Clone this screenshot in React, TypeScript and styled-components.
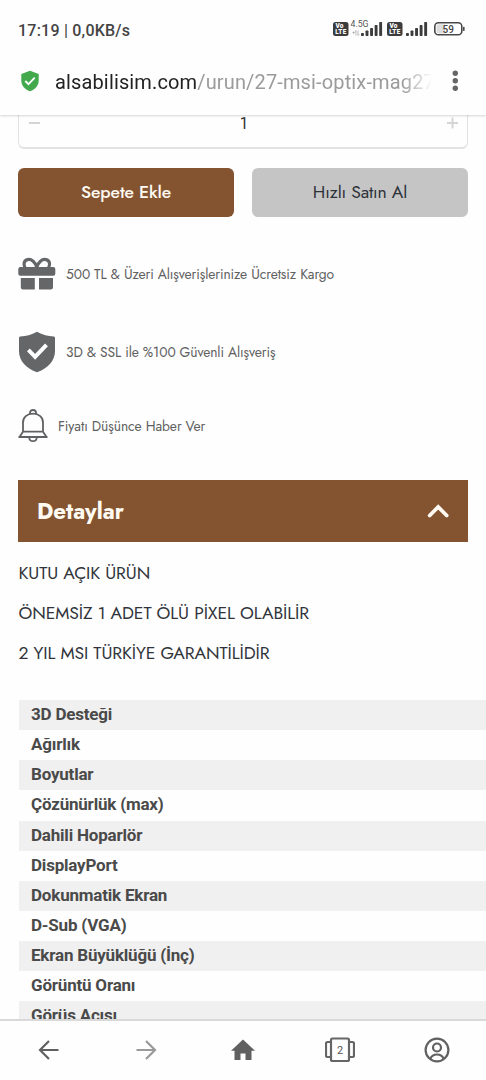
import React from "react";
import styled, { createGlobalStyle } from "styled-components";

const brown = "#845431";
const jost = '"Jost", "Lato", sans-serif';

const GlobalStyle = createGlobalStyle`
  * { box-sizing: border-box; }
  html, body { margin: 0; padding: 0; background: #fefefe; }
  body { overflow: hidden; }
  svg { display: block; flex: none; }
`;

const Screen = styled.div`
  width: 486px;
  height: 1080px;
  display: flex;
  flex-direction: column;
  overflow: hidden;
  background: #fefefe;
  font-family: Roboto, sans-serif;
  white-space: nowrap;
`;

const Header = styled.header`
  flex: none;
  height: 115px;
  background: #fefefe;
  box-shadow: 0 1px 2px rgba(0, 0, 0, 0.16);
  z-index: 1;
`;

const StatusBar = styled.div`
  height: 58px;
  padding: 2px 21px 0 18px;
  display: flex;
  align-items: center;
  justify-content: space-between;
`;

const Clock = styled.span`
  font-size: 16px;
  font-weight: 500;
  color: #444;
  letter-spacing: 0.22px;
`;

const AddressBar = styled.div`
  height: 46px;
  padding: 0 26px 0 20px;
  display: flex;
  align-items: center;
`;

const Address = styled.div`
  width: 377px;
  margin: 1px 19px 0 15px;
  overflow: hidden;
  font-size: 20px;
  line-height: 30px;
  letter-spacing: 0.14px;
  color: #9b9b9b;
  mask-image: linear-gradient(to right, #000 92%, transparent 100%);
`;

const Host = styled.span`
  color: #222;
`;

const Page = styled.main`
  flex: 1;
  min-height: 0;
  overflow: hidden;
`;

const Quantity = styled.div`
  margin: -16px 18px 0;
  height: 49.5px;
  padding: 0 9px 0 10px;
  border: 1.5px solid #e2e2e2;
  border-bottom-width: 2px;
  border-radius: 6px;
  display: flex;
  align-items: center;
  justify-content: space-between;
  font: 17px ${jost};
  color: #333;
`;

const Actions = styled.div`
  margin: 19px 18px 18px;
  display: flex;
  gap: 18px;
`;

const Button = styled.button<{ $primary?: boolean; $spacing: number }>`
  flex: 1;
  height: 49.5px;
  padding: 0;
  border: 0;
  border-radius: 6px;
  background: ${(p) => (p.$primary ? brown : "#c5c5c5")};
  color: ${(p) => (p.$primary ? "#fffaf2" : "#2d3138")};
  font: ${(p) => (p.$primary ? 500 : 400)} 17.5px ${jost};
  letter-spacing: ${(p) => p.$spacing}px;
`;

const Feature = styled.div<{ $height: number; $spacing: number }>`
  height: ${(p) => p.$height}px;
  padding-left: 18px;
  display: flex;
  align-items: center;
  gap: 10px;
  font: 13.8px/18px ${jost};
  letter-spacing: ${(p) => p.$spacing}px;
  color: #606060;
`;

const Accordion = styled.div`
  margin: 19px 18px 0;
  height: 62px;
  padding: 0 18px 0 19px;
  display: flex;
  align-items: center;
  justify-content: space-between;
  background: ${brown};
  color: #fffaf2;
`;

const AccordionTitle = styled.h2`
  margin: 0 0 1px;
  font: 700 22.3px ${jost};
`;

const Description = styled.div`
  padding: 12.4px 18.5px 0;
  color: #30343a;
`;

const Line = styled.p`
  margin: 0;
  height: 39.8px;
  font: 17.5px/39.8px ${jost};
  letter-spacing: -0.09px;
`;

const Specs = styled.div`
  margin: 26.2px 0 0 18.5px;
`;

const SpecRow = styled.div`
  height: 30.15px;
  padding-left: 12.5px;
  font-size: 17px;
  font-weight: 700;
  line-height: 29px;
  letter-spacing: -0.2px;
  color: #4a4a4a;
  &:nth-child(odd) { background: #f0f0f0; }
`;

const BottomBar = styled.nav`
  flex: none;
  height: 61px;
  padding-bottom: 1px;
  border-top: 2px solid #d9d9d9;
  background: #fefefe;
  display: grid;
  grid-template-columns: repeat(5, 1fr);
  place-items: center;
  z-index: 1;
`;

const Volte = ({ x }: { x: number }) => (
  <g fontFamily="Roboto, sans-serif" fontWeight="900" fill="#fff">
    <rect x={x} y="2" width="15.5" height="14" rx="2.5" fill="#3c3c3c" />
    <text x={x + 2.5} y="8.2" fontSize="6.5">Vo</text>
    <text x={x + 2.2} y="14.4" fontSize="6.3" textLength="11">LTE</text>
  </g>
);

const Signal = ({ x }: { x: number }) => (
  <g fill="#3c3c3c">
    {[3, 5.5, 8, 11, 14].map((h, i) => (
      <rect key={h} x={x + i * 4.55} y={16 - h} width="2.9" height={h} rx="0.7" />
    ))}
  </g>
);

const StatusIcons = () => (
  <svg width="132" height="20" viewBox="0 0 132 20">
    <Volte x={0} />
    <text x="17.5" y="7.3" fontFamily="Roboto, sans-serif" fontSize="8.7" fill="#555" textLength="18">4.5G</text>
    <path d="M19.5 12.5h2.3M20.5 11.5v2.5M23 15.5v-5l-1.2 1.2M25 10.5v5l1.2-1.2" stroke="#aaa" strokeWidth=".8" fill="none" />
    <Signal x={28} />
    <Volte x={54} />
    <Signal x={73} />
    <rect x="101.8" y="2.8" width="27" height="12" rx="3.6" fill="#fff" stroke="#484848" strokeWidth="1.6" />
    <path d="M105.5 4.2h6.500v9.200h-6.500a2 2 0 0 1-2-2V6.200a2 2 0 0 1 2-2z" fill="#ddd" />
    <rect x="130" y="6.7" width="1.6" height="4.2" rx=".7" fill="#484848" />
    <text x="115.3" y="12.5" fontFamily="Roboto, sans-serif" fontWeight="500" fontSize="10" fill="#444" textAnchor="middle">59</text>
  </svg>
);

const SecureIcon = () => (
  <svg width="20" height="22" viewBox="0 0 20 22">
    <path d="M10 .8 18.7 4v6.5c0 5-3.2 8.6-8.7 10.8C4.5 19.1 1.3 15.5 1.3 10.5V4z" fill="#43a94d" />
    <path d="m5.3 11 3.2 3.2 6.2-6.6" fill="none" stroke="#fff" strokeWidth="1.8" />
  </svg>
);

const MenuIcon = () => (
  <svg width="8" height="22" viewBox="0 0 8 22">
    {[3.3, 10.8, 18.3].map((y) => <circle key={y} cx="4.3" cy={y} r="2.7" fill="#666" />)}
  </svg>
);

const GiftIcon = () => (
  <svg width="38" height="34" viewBox="0 0 38 34">
    <g fill="#646668">
      <rect x=".3" y="10" width="37" height="8.7" rx="2" />
      <path d="M2.8 21h14v11.500H5a2.200 2.200 0 0 1-2.200-2.200zM21 21h14v9.300a2.200 2.200 0 0 1-2.200 2.200H21z" />
    </g>
    <path d="M18.800 10.500C17.500 5 13.500 1.800 9.600 2.600 5.600 3.500 5.300 7.500 7 10.500M18.800 10.500C20.100 5 24.100 1.800 28 2.600c4 .9 4.300 4.900 2.600 7.900" fill="none" stroke="#646668" strokeWidth="3.2" />
  </svg>
);

const ShieldIcon = () => (
  <svg width="38" height="42" viewBox="0 0 38 42">
    <path d="M19 .8c5.500 3.200 11 4.500 16.500 4.700 1 0 1.500.6 1.500 1.500v13c0 10-7.500 17.500-18 21.300C8.500 37.500 1 30 1 20V7c0-.9.5-1.500 1.500-1.500C8 5.300 13.500 4 19 .8z" fill="#646668" />
    <path d="m11.800 20.300 5.300 5.500 10-10.500" fill="none" stroke="#fff" strokeWidth="4" strokeLinecap="square" />
  </svg>
);

const BellIcon = () => (
  <svg width="30" height="34" viewBox="0 0 30 34" fill="none" stroke="#5f6163" strokeWidth="1.8" strokeLinejoin="round">
    <path d="M12 5.300V3.800c0-1.800 1.200-2.800 3-2.800s3 1 3 2.800v1.500" />
    <path d="M5 22.700V13.500C5 8.400 9 4.700 15 4.700s10 3.700 10 8.800v9.200zM5 22.700l-3.500 5.200h27L25 22.700M.5 28h29" />
    <path d="M11.200 28.500c.2 2.400 1.600 3.700 3.800 3.700s3.600-1.300 3.800-3.700" />
  </svg>
);

const specs = [
  "3D Desteği", "Ağırlık", "Boyutlar", "Çözünürlük (max)", "Dahili Hoparlör", "DisplayPort",
  "Dokunmatik Ekran", "D-Sub (VGA)", "Ekran Büyüklüğü (İnç)", "Görüntü Oranı", "Görüş Açısı",
];

const Arrow = ({ forward }: { forward?: boolean }) => (
  <svg width="22" height="22" viewBox="0 0 22 22" fill="none" stroke={forward ? "#999" : "#606060"} strokeWidth="2.2">
    <path d={forward ? "M1.5 11h18M11 2l9 9-9 9" : "M20.5 11h-18M11 2l-9 9 9 9"} />
  </svg>
);

export default function App() {
  return (
    <Screen>
      <GlobalStyle />
      <Header>
        <StatusBar>
          <Clock>17:19 | 0,0KB/s</Clock>
          <StatusIcons />
        </StatusBar>
        <AddressBar>
          <SecureIcon />
          <Address><Host>alsabilisim.com</Host>/urun/27-msi-optix-mag27</Address>
          <MenuIcon />
        </AddressBar>
      </Header>
      <Page>
        <Quantity>
          <svg width="11" height="12"><path d="M0 6h11" stroke="#d5d5d5" strokeWidth="2" /></svg>
          <span>1</span>
          <svg width="11" height="12"><path d="M0 6h11M5.5 .5v11" stroke="#d5d5d5" strokeWidth="2" /></svg>
        </Quantity>
        <Actions>
          <Button $primary $spacing={-0.1}>Sepete Ekle</Button>
          <Button $spacing={-0.1}>Hızlı Satın Al</Button>
        </Actions>
        <Feature $height={78} $spacing={-0.09}><GiftIcon /><span>500 TL &amp; Üzeri Alışverişlerinize Ücretsiz Kargo</span></Feature>
        <Feature $height={78} $spacing={-0.09}><ShieldIcon /><span>3D &amp; SSL ile %100 Güvenli Alışveriş</span></Feature>
        <Feature $height={70} $spacing={-0.07}><BellIcon /><span>Fiyatı Düşünce Haber Ver</span></Feature>
        <Accordion>
          <AccordionTitle>Detaylar</AccordionTitle>
          <svg width="23" height="14" viewBox="0 0 23 14"><path d="m2.7 11.500 8.500-8.500 8.500 8.500" fill="none" stroke="#fffaf2" strokeWidth="3.8" strokeLinecap="round" /></svg>
        </Accordion>
        <Description>
          <Line>KUTU AÇIK ÜRÜN</Line>
          <Line>ÖNEMSİZ 1 ADET ÖLÜ PİXEL OLABİLİR</Line>
          <Line>2 YIL MSI TÜRKİYE GARANTİLİDİR</Line>
        </Description>
        <Specs>{specs.map((name) => <SpecRow key={name}>{name}</SpecRow>)}</Specs>
      </Page>
      <BottomBar>
        <Arrow />
        <Arrow forward />
        <svg width="26" height="24" viewBox="0 0 26 24"><path d="M13 1.5 1 12.800h3.500V22h6v-6.500h5V22h6v-9.200H25z" fill="#606060" /></svg>
        <svg width="30" height="26" viewBox="0 0 30 26" fill="none" stroke="#666" strokeWidth="2.2">
          <rect x="6" y="1.5" width="18" height="22.5" rx="1.5" />
          <path d="M6 5H2.500Q1 5 1 6.500v12Q1 20 2.500 20H6M24 5h3.500Q29 5 29 6.500v12q0 1.500-1.500 1.500H24" />
          <text x="15" y="16.8" fill="#555" stroke="none" fontFamily="Roboto, sans-serif" fontSize="11" textAnchor="middle">2</text>
        </svg>
        <svg width="26" height="26" viewBox="0 0 26 26" fill="none" stroke="#606060" strokeWidth="2.2">
          <circle cx="13" cy="13" r="11.4" />
          <circle cx="13" cy="10.5" r="4" />
          <path d="M6.300 21.800c1.200-3 3.800-4.300 6.700-4.300s5.500 1.300 6.700 4.300" />
        </svg>
      </BottomBar>
    </Screen>
  );
}
